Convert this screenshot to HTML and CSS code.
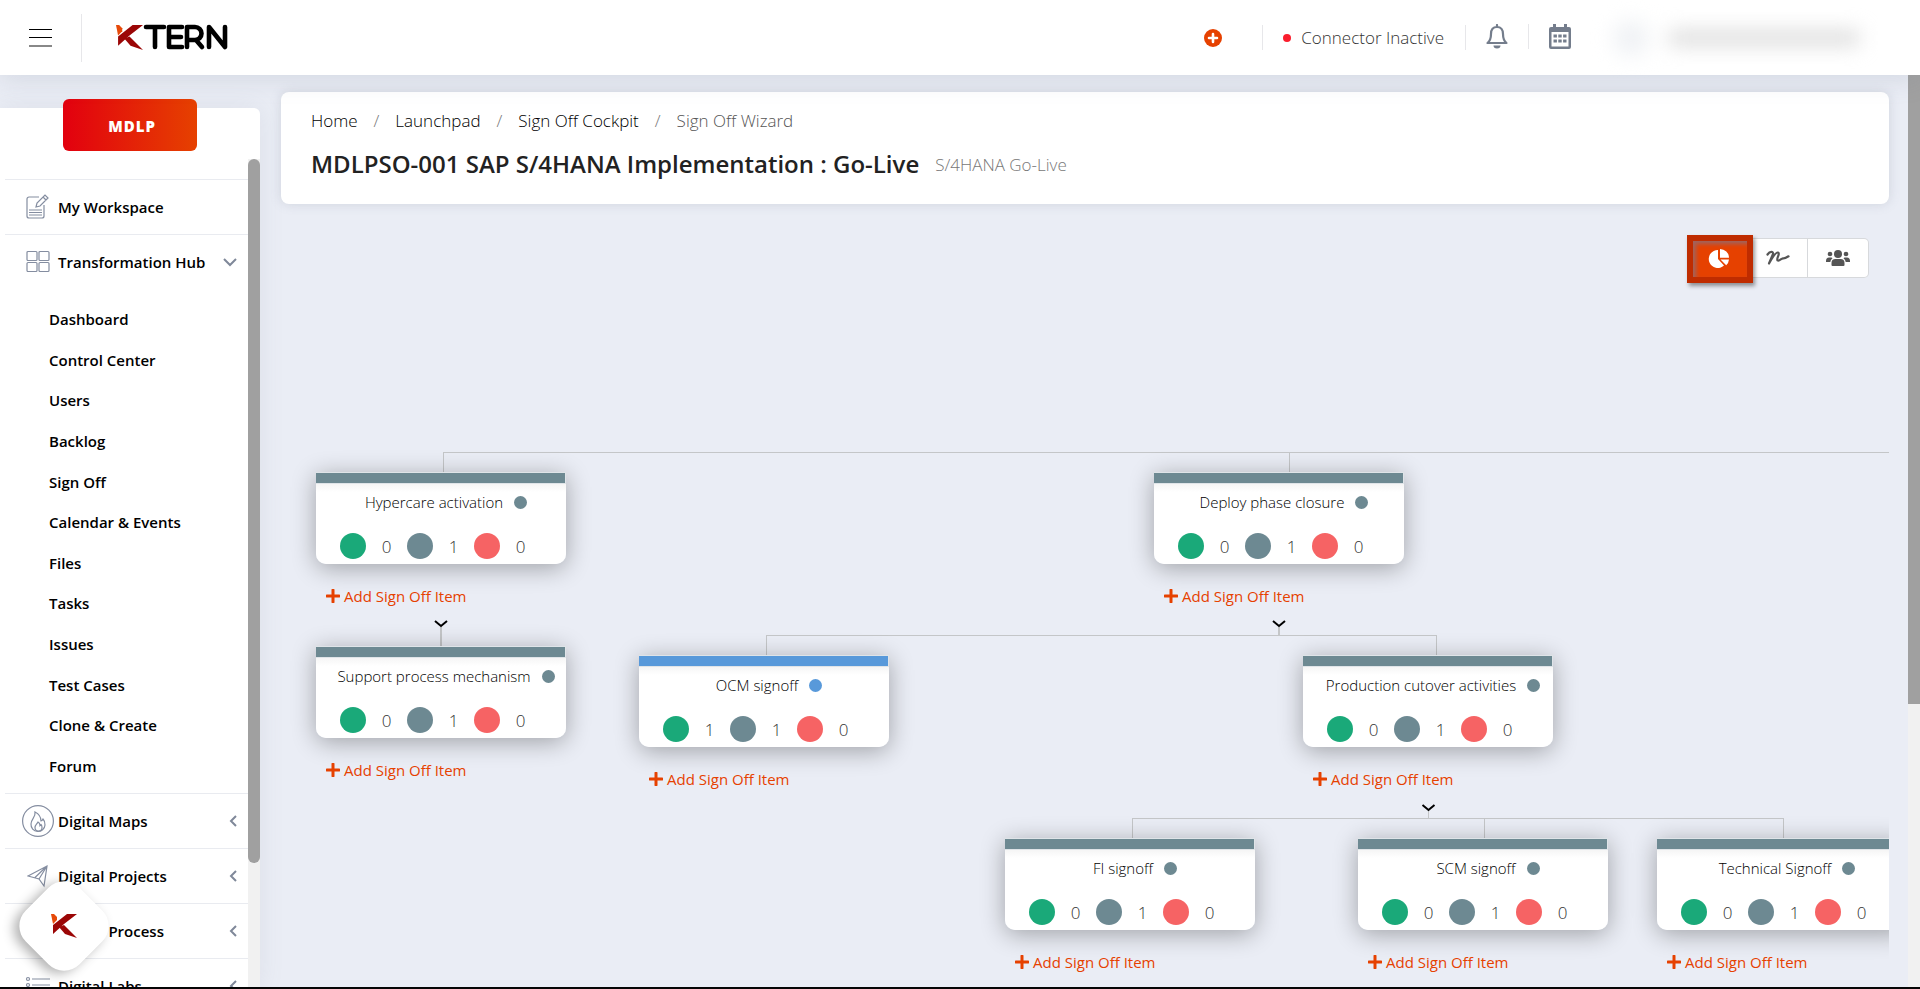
FILE: index.html
```html
<!DOCTYPE html>
<html lang="en">
<head>
<meta charset="utf-8">
<title>Sign Off Wizard</title>
<link rel="stylesheet" href="styles.css">
</head>
<body>
<svg class="defs" aria-hidden="true">
  <symbol id="k-mark" viewBox="0 0 26 26">
    <path d="M0 1l3 0 3 3 0 3-4 4z" fill="#e64a0a"/>
    <path d="M2 21V12L16 1h10L13 11z" fill="#9b0606"/>
    <path d="M8 14l5-2 13 13-12-4z" fill="#9b0606"/>
  </symbol>
  <symbol id="chev-left" viewBox="0 0 8 12"><path d="M7 1L2 6l5 5" fill="none" stroke="#7f8899" stroke-width="2"/></symbol>
  <symbol id="plus" viewBox="0 0 14 14"><path d="M7 1v12M1 7h12" stroke="#e64100" stroke-width="3" stroke-linecap="round"/></symbol>
</svg>
<header class="topbar">
  <button class="menu-btn" aria-label="Toggle menu"><i></i><i></i><i></i></button>
  <a class="logo" href="#" aria-label="KTERN">
    <svg width="113" height="28" viewBox="0 0 113 28">
      <svg width="27" height="27"><use href="#k-mark"/></svg>
      <g fill="none" stroke="#000" stroke-width="4.6" stroke-linecap="round" stroke-linejoin="round">
        <path d="M30 3h18M39 3v20"/><path d="M66 3H53v20h13M54 13h11"/><path d="M71 23V3h8a6 6 0 0 1 0 13h-7M80 16l6 7"/><path d="M93 23V3l16 20V3"/>
      </g>
    </svg>
  </a>
  <button class="add-btn" aria-label="Add"><svg width="18" height="18" viewBox="0 0 18 18"><circle cx="9" cy="9" r="9" fill="#e64100"/><path d="M9 5v8M5 9h8" stroke="#fff" stroke-width="2.6" stroke-linecap="round"/></svg></button>
  <div class="connector"><span class="status-dot"></span>Connector Inactive</div>
  <button class="icon-btn bell" aria-label="Notifications"><svg width="22" height="25" viewBox="0 0 22 25"><path d="M11 1v2M11 3c-4 0-6 3-6 7 0 5-1 7-3.500 9h19c-2.500-2-3.500-4-3.500-9 0-4-2-7-6-7z" fill="none" stroke="#747d8c" stroke-width="2.200" stroke-linejoin="round" stroke-linecap="round"/><path d="M7.500 21.500h7a3.500 3 0 0 1-7 0z" fill="#747d8c"/></svg></button>
  <button class="icon-btn calendar" aria-label="Calendar"><svg width="22" height="25" viewBox="0 0 22 25"><path d="M4 0h3v3h8V0h3v3h2a2 2 0 0 1 2 2v18a2 2 0 0 1-2 2H2a2 2 0 0 1-2-2V5a2 2 0 0 1 2-2h2zM2.500 8v14.500h17V8z" fill="#747d8c" fill-rule="evenodd"/><path d="M4.500 12h13M4.500 17h13" stroke="#747d8c" stroke-width="3.200" stroke-dasharray="3.400 1.400"/></svg></button>
  <div class="profile" aria-hidden="true"><span class="avatar"></span><span class="user-line"></span></div>
</header>
<div class="shell">
  <aside class="sidebar">
    <button class="project-btn">MDLP</button>
    <div class="side-scroll">
      <nav class="side-nav">
        <a class="row" href="#"><svg class="ico" width="24" height="26" viewBox="0 0 24 26"><path d="M13 3H3a2 2 0 0 0-2 2v17a2 2 0 0 0 2 2h13a2 2 0 0 0 2-2V11M3 16h13M3 18.500h13M3 21h13M10 13l1-4 8-8 3 3-8 8zM17 3l3 3"/></svg><span>My Workspace</span></a>
        <a class="row" href="#"><svg class="ico" width="24" height="24" viewBox="0 0 24 24"><rect x="1" y="1.500" width="10" height="9" rx="1"/><rect x="13" y="1.500" width="10" height="9" rx="1"/><rect x="1" y="12.500" width="10" height="9" rx="1"/><rect x="13" y="12.500" width="10" height="9" rx="1"/></svg><span>Transformation Hub</span><svg class="chev" width="14" height="9" viewBox="0 0 14 9"><path d="M1 1l6 6 6-6" fill="none" stroke="#7f8899" stroke-width="2"/></svg></a>
        <div class="sub">
          <a href="#">Dashboard</a><a href="#">Control Center</a><a href="#">Users</a><a href="#">Backlog</a><a href="#">Sign Off</a><a href="#">Calendar &amp; Events</a><a href="#">Files</a><a href="#">Tasks</a><a href="#">Issues</a><a href="#">Test Cases</a><a href="#">Clone &amp; Create</a><a href="#">Forum</a>
        </div>
        <a class="row" href="#"><svg class="ico" width="32" height="32" viewBox="0 0 32 32"><circle cx="16" cy="16" r="15.400"/><path d="M13 7c1 5-4 7-4 12a7 7 0 0 0 14 1c0-3-1-5-2-6-1 2-2 2-2 2 0-4-2-7-6-9z"/><path d="M16 17c-1 2-3 3-3 5.500a3.500 3.500 0 0 0 7 0c0-2-1-3-1-3l-1 1c0-1-1-3-2-3.500z"/></svg><span>Digital Maps</span><svg class="chev" width="8" height="12"><use href="#chev-left"/></svg></a>
        <a class="row" href="#"><svg class="ico" width="22" height="24" viewBox="0 0 22 24"><path d="M1 12L20 2l-3 20-5-7zM20 2l-8 13M8 13.500L20 2"/></svg><span>Digital Projects</span><svg class="chev" width="8" height="12"><use href="#chev-left"/></svg></a>
        <a class="row" href="#"><svg class="ico" width="24" height="24" viewBox="0 0 24 24"><circle cx="12" cy="12" r="5"/></svg><span>Digital Process</span><svg class="chev" width="8" height="12"><use href="#chev-left"/></svg></a>
        <a class="row" href="#"><svg class="ico" width="26" height="20" viewBox="0 0 26 20"><circle cx="3" cy="3" r="1.500"/><circle cx="3" cy="9" r="1.500"/><circle cx="3" cy="15" r="1.500"/><path d="M7 3h18M7 9h18M7 15h18"/></svg><span>Digital Labs</span><svg class="chev" width="8" height="12"><use href="#chev-left"/></svg></a>
      </nav>
      <div class="side-track"><div class="side-thumb"></div></div>
    </div>
  </aside>
  <main class="content">
    <section class="heading">
      <nav class="crumbs" aria-label="Breadcrumb"><a href="#">Home</a><i>/</i><a href="#">Launchpad</a><i>/</i><a href="#">Sign Off Cockpit</a><i>/</i><span>Sign Off Wizard</span></nav>
      <div class="title-line"><h1>MDLPSO-001 SAP S/4HANA Implementation : Go-Live</h1><small>S/4HANA Go-Live</small></div>
    </section>
    <div class="views">
      <button class="view active" aria-label="Chart view"><svg width="22" height="20" viewBox="0 0 22 20"><path d="M10 1a9 9 0 1 0 6 15.500L10 10z" fill="#fff"/><path d="M12 0a9 9 0 0 1 9 8.800h-9zM12.500 10.500H21a9 9 0 0 1-2.800 5.800z" fill="#fff"/></svg></button>
      <button class="view" aria-label="Signature view"><svg width="24" height="16" viewBox="0 0 24 16"><path d="M1.500 4.500C4 1 7.500 1 7 4L3 13.500C6 8 9.500 2 12 2.500c2.500.8-2 6.500-.5 7.800C13.500 11.500 15 8.500 17 8.300c1 .4 3-.5 5.500-2" fill="none" stroke="#555" stroke-width="2.200" stroke-linecap="round" stroke-linejoin="round"/></svg></button>
      <button class="view" aria-label="Team view"><svg width="24" height="18" viewBox="0 0 24 18" fill="#555"><circle cx="12" cy="5" r="4"/><circle cx="4" cy="5" r="2.300"/><circle cx="20" cy="5" r="2.300"/><path d="M5.500 16v-2a4 4 0 0 1 4-4h5a4 4 0 0 1 4 4v2q0 1-1 1h-11q-1 0-1-1zM0 12a3.500 3.500 0 0 1 3-3.500h2.500l1 .7Q4.500 11 4.300 13H0zM24 12a3.500 3.500 0 0 0-3-3.500h-2.500l-1 .7q2 1.800 2.200 3.800H24z"/></svg></button>
    </div>
    <div class="canvas">
      <svg class="links" width="100%" height="100%" fill="none" stroke="#c4c6c8" shape-rendering="crispEdges">
        <path d="M162.500 194V174.500H1700M1008.500 174.500V194M485.500 377V357.500H1155.500V377M851.500 560V540.500H1502.500V560M1203.500 540.500V560"/>
        <path d="M160 349V368M998 349V357" stroke-width="2"/><path d="M1147.500 532V540"/>
        <g stroke="#000" stroke-width="2" shape-rendering="geometricPrecision"><path d="M154 343l6 5 6-5M992 343l6 5 6-5M1141.500 527l6 5 6-5"/></g>
      </svg>
      <article class="node n-hypercare"><div class="card"><h2>Hypercare activation<b></b></h2><div class="counts"><b class="ok"></b><span>0</span><b></b><span>1</span><b class="bad"></b><span>0</span></div></div><button class="add-item"><svg width="14" height="14"><use href="#plus"/></svg>Add Sign Off Item</button></article>
      <article class="node n-support"><div class="card"><h2>Support process mechanism<b></b></h2><div class="counts"><b class="ok"></b><span>0</span><b></b><span>1</span><b class="bad"></b><span>0</span></div></div><button class="add-item"><svg width="14" height="14"><use href="#plus"/></svg>Add Sign Off Item</button></article>
      <article class="node n-deploy"><div class="card"><h2>Deploy phase closure<b></b></h2><div class="counts"><b class="ok"></b><span>0</span><b></b><span>1</span><b class="bad"></b><span>0</span></div></div><button class="add-item"><svg width="14" height="14"><use href="#plus"/></svg>Add Sign Off Item</button></article>
      <article class="node n-ocm progress"><div class="card"><h2>OCM signoff<b></b></h2><div class="counts"><b class="ok"></b><span>1</span><b></b><span>1</span><b class="bad"></b><span>0</span></div></div><button class="add-item"><svg width="14" height="14"><use href="#plus"/></svg>Add Sign Off Item</button></article>
      <article class="node n-production"><div class="card"><h2>Production cutover activities<b></b></h2><div class="counts"><b class="ok"></b><span>0</span><b></b><span>1</span><b class="bad"></b><span>0</span></div></div><button class="add-item"><svg width="14" height="14"><use href="#plus"/></svg>Add Sign Off Item</button></article>
      <article class="node n-fi"><div class="card"><h2>FI signoff<b></b></h2><div class="counts"><b class="ok"></b><span>0</span><b></b><span>1</span><b class="bad"></b><span>0</span></div></div><button class="add-item"><svg width="14" height="14"><use href="#plus"/></svg>Add Sign Off Item</button></article>
      <article class="node n-scm"><div class="card"><h2>SCM signoff<b></b></h2><div class="counts"><b class="ok"></b><span>0</span><b></b><span>1</span><b class="bad"></b><span>0</span></div></div><button class="add-item"><svg width="14" height="14"><use href="#plus"/></svg>Add Sign Off Item</button></article>
      <article class="node n-technical"><div class="card"><h2>Technical Signoff<b></b></h2><div class="counts"><b class="ok"></b><span>0</span><b></b><span>1</span><b class="bad"></b><span>0</span></div></div><button class="add-item"><svg width="14" height="14"><use href="#plus"/></svg>Add Sign Off Item</button></article>
    </div>
  </main>
  <div class="page-track"><div class="page-thumb"></div></div>
</div>
<button class="chat" aria-label="Open assistant"><span class="chat-shape"></span><svg width="26" height="26"><use href="#k-mark"/></svg></button>
</body>
</html>
```
FILE: styles.css
```css
* { box-sizing: border-box; }
body {
  margin: 0;
  height: 100vh;
  display: flex;
  flex-direction: column;
  overflow: hidden;
  background: #eaedf5;
  border-bottom: 2px solid #050505;
  font-family: "Open Sans", "Noto Sans", sans-serif;
  font-size: 16px;
  color: #222;
}
a { color: inherit; text-decoration: none; }
button { font: inherit; border: 0; padding: 0; background: none; color: inherit; }
svg { display: block; flex: none; }
.defs { position: absolute; width: 0; height: 0; }

/* Top bar */
.topbar {
  flex: none;
  height: 75px;
  display: flex;
  align-items: center;
  background: #fff;
  box-shadow: 0 4px 24px rgba(120, 130, 150, .2);
  z-index: 2;
}
.menu-btn {
  width: 82px;
  height: 48px;
  padding: 0 29px;
  border-right: 1px solid #e7e7ea;
  display: flex;
  flex-direction: column;
  justify-content: center;
  gap: 7px;
}
.menu-btn i { height: 1px; background: #000; }
.menu-btn i:last-child { height: 2px; background: #888; }
.logo { margin-left: 34px; }
.add-btn { margin-left: auto; width: 18px; }
.connector {
  display: flex;
  align-items: center;
  gap: 10px;
  height: 25px;
  margin-left: 40px;
  padding: 0 21px 0 20px;
  border: solid #e7e7ea;
  border-width: 0 1px;
  font-size: 17px;
  font-weight: 300;
  color: #333;
}
.status-dot { width: 8px; height: 8px; border-radius: 50%; background: #fa1e2d; }
.icon-btn { height: 25px; margin-top: -2px; padding: 0 20px; }
.bell { border-right: 1px solid #e7e7ea; }
.profile { display: flex; align-items: center; gap: 20px; width: 329px; padding-left: 22px; filter: blur(10px); }
.avatar { width: 36px; height: 36px; border-radius: 50%; background: #f0f2f5; }
.user-line { width: 190px; height: 14px; background: #d8d8d8; }

.shell { flex: 1; min-height: 0; display: flex; }

/* Sidebar */
.sidebar {
  flex: none;
  width: 260px;
  margin-top: 33px;
  display: flex;
  flex-direction: column;
  background: #fff;
  border-radius: 0 6px 0 0;
  box-shadow: 0 0 24px rgba(120, 130, 150, .12);
}
.project-btn {
  flex: none;
  width: 134px;
  height: 52px;
  margin: -9px auto 8px 63px;
  padding: 2px 0 0 4px;
  border-radius: 6px;
  background: linear-gradient(90deg, #e2000f, #e64100);
  color: #fff;
  font-size: 15px;
  font-weight: 800;
  letter-spacing: 1px;
}
.side-scroll { flex: 1; min-height: 0; display: flex; overflow: hidden; }
.side-nav { flex: 1; padding: 20px 0 0 5px; font-size: 15px; font-weight: 600; color: #000; }
.row {
  display: grid;
  grid-template-columns: 34px 1fr auto;
  align-items: center;
  column-gap: 3px;
  height: 55px;
  padding: 0 11px 0 16px;
  border-top: 1px solid #e9ebf0;
}
.ico { justify-self: center; fill: none; stroke: #848da0; stroke-width: 1.2; }
.row span { white-space: nowrap; }
.sub { display: grid; grid-auto-rows: 1fr; height: 487px; margin: 10px 0 7px 44px; }
.sub a { display: flex; align-items: center; }
.side-track { width: 12px; background: #f1f1f1; }
.side-thumb { height: 85%; border-radius: 6px; background: #a0a0a0; }

/* Main */
.content { flex: 1; min-width: 0; display: flex; flex-direction: column; padding: 17px 19px 0 21px; }
.heading {
  flex: none;
  height: 112px;
  padding: 16px 30px;
  border-radius: 8px;
  background: #fff;
  box-shadow: 0 0 12px rgba(100, 110, 130, .2);
}
.crumbs { display: flex; gap: 16px; line-height: 26px; font-size: 17px; font-weight: 300; color: #000; }
.crumbs i { font-style: normal; color: #777; }
.crumbs span { color: #555; }
.title-line { display: flex; align-items: center; gap: 16px; margin-top: 12px; }
h1 { margin: 0; font-size: 24px; line-height: 36px; font-weight: 600; }
small { font-size: 17px; font-weight: 300; color: #777; }
.views { flex: none; display: flex; justify-content: flex-end; margin: 34px 20px 0 0; height: 40px; }
.view {
  width: 61px;
  border: 1px solid #d7d9dc;
  border-left-width: 0;
  background: #fff;
  display: grid;
  place-items: center;
}
.view:nth-child(2) { width: 55px; padding-right: 4px; }
.view:last-child { border-radius: 0 5px 5px 0; }
.view.active {
  width: 66px;
  height: 48px;
  margin-top: -3px;
  padding-right: 2px;
  border: 6px solid #bf2c00;
  background: #e64100;
  box-shadow: 2px 3px 4px rgba(0, 0, 0, .4), inset 3px 3px 4px #9d6460;
  z-index: 1;
}

/* Sign off tree */
.canvas { flex: 1; min-height: 0; position: relative; overflow: hidden; }
.links { position: absolute; inset: 0; }
.node { position: absolute; width: 250px; --state: #6d8992; }
.node.progress { --state: #5899da; }
.n-hypercare { left: 35px; top: 194px; }
.n-support { left: 35px; top: 368px; }
.n-deploy { left: 873px; top: 194px; }
.n-ocm { left: 358px; top: 377px; }
.n-production { left: 1022px; top: 377px; }
.n-fi { left: 724px; top: 560px; }
.n-scm { left: 1077px; top: 560px; }
.n-technical { left: 1376px; top: 560px; }
.card {
  height: 92px;
  border-radius: 0 0 10px 10px;
  background: linear-gradient(#f3f3f3 10px, #fff 20px);
  box-shadow: 0 4px 24px rgba(0, 0, 0, .32);
}
.card::before {
  content: "";
  display: block;
  width: 249px;
  height: 10px;
  border: solid #dfe4e8;
  border-width: 1px 1px 1px 0;
  background: var(--state) padding-box;
}
h2 {
  display: flex;
  justify-content: center;
  align-items: center;
  gap: 11px;
  margin: 7px 0 0 10px;
  font-size: 15px;
  line-height: 22px;
  font-weight: 300;
  color: #000;
  white-space: nowrap;
}
h2 b { width: 13px; height: 13px; border-radius: 50%; background: var(--state); }
.counts { display: flex; align-items: center; margin: 20px 0 0 24px; height: 26px; font-size: 17px; font-weight: 300; color: #333; }
.counts b { width: 26px; height: 26px; border-radius: 50%; background: #6d8992; }
.counts .ok { background: #1aa979; }
.counts .bad { background: #f66364; }
.counts span { width: 41px; text-align: center; }
.add-item { display: flex; align-items: center; gap: 4px; margin: 21px 0 0 10px; font-size: 15px; line-height: 22px; color: #e64100; }

.page-track { width: 12px; background: #f1f1f1; }
.page-thumb { height: 69%; background: #a0a0a0; }

/* Assistant launcher */
.chat { position: fixed; left: 18px; bottom: 17px; width: 92px; height: 92px; display: grid; place-items: center; z-index: 3; }
.chat > * { grid-area: 1 / 1; z-index: 1; }
.chat .chat-shape {
  width: 76px;
  height: 76px;
  border-radius: 22px;
  background: #fff;
  box-shadow: -2px 6px 12px rgba(0, 0, 0, .3);
  transform: rotate(45deg);
}
```
